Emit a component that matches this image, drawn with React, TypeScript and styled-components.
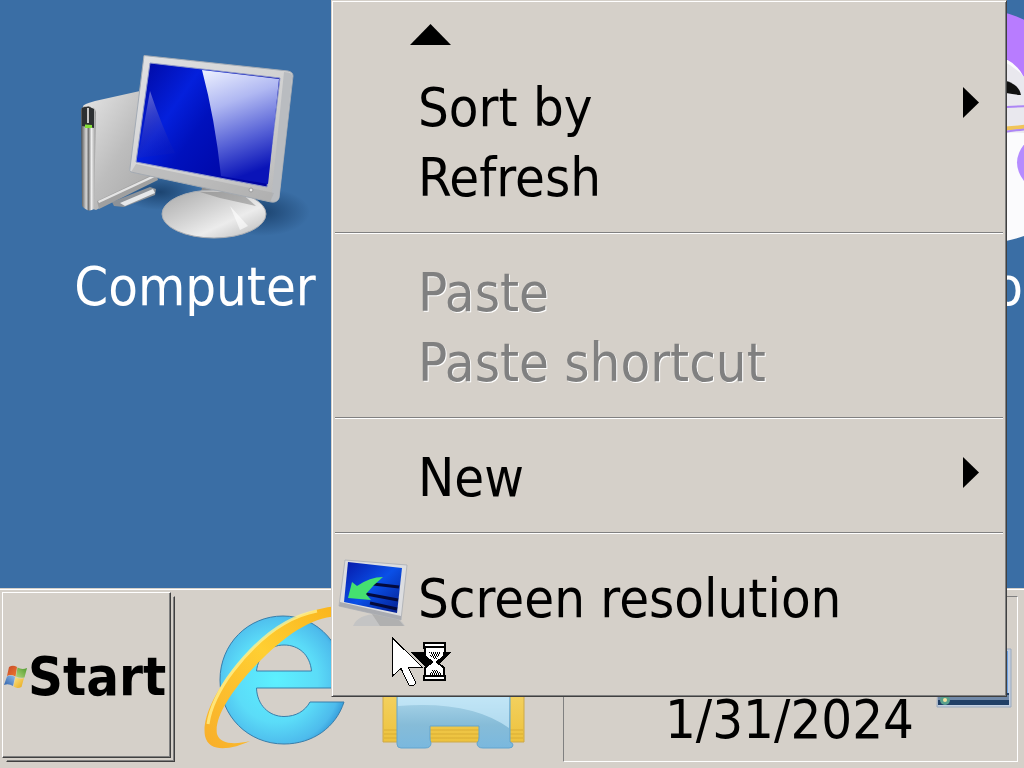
import React from "react";
import styled, { createGlobalStyle, css } from "styled-components";

const FACE = "#d5d0c9";
const SHADOW = "#808080";
const DARK = "#404040";

const GlobalStyle = createGlobalStyle`
  *, *::before, *::after { box-sizing: border-box; }
  html, body { margin: 0; padding: 0; }
  body {
    overflow: hidden;
    background: #3a6ea5;
    color: #000;
    font-family: "DejaVu Sans Condensed", "DejaVu Sans", sans-serif;
    font-size: 54px;
    line-height: 70px;
  }
  svg { display: block; flex: none; overflow: visible; }
`;

const Screen = styled.div`
  position: relative;
  display: flex;
  flex-direction: column;
  min-height: 100vh;
  overflow: hidden;
`;

const Desktop = styled.main`
  position: relative;
  flex: 1;
`;

const Shortcut = styled.a<{ $x: number; $y: number }>`
  position: absolute;
  left: ${(p) => p.$x}px;
  top: ${(p) => p.$y}px;
  display: flex;
  flex-direction: column;
  align-items: center;
  gap: 8px;
  width: 240px;
  color: #fff;
  text-decoration: none;
`;

const Taskbar = styled.footer`
  display: flex;
  align-items: stretch;
  height: 180px;
  padding: 3px 6px 6px 2px;
  background: ${FACE};
  border-top: 1px solid ${FACE};
  box-shadow: inset 0 1px 0 #fff;
`;

const StartButton = styled.button`
  position: relative;
  display: flex;
  align-items: center;
  width: 169px;
  margin: 0 4px 4px 0;
  padding: 4px 0 0 1px;
  border: 1px solid;
  border-color: #fff ${DARK} ${DARK} #fff;
  box-shadow: inset -1px -1px 0 ${SHADOW};
  background: ${FACE};
  color: #000;
  font: inherit;
  font-weight: bold;

  &::after {
    content: "";
    position: absolute;
    inset: 3px -5px -5px 3px;
    border: 1px solid;
    border-color: transparent ${DARK} ${DARK} transparent;
    box-shadow: inset -1px -1px 0 ${SHADOW};
    clip-path: polygon(100% 0, 100% 100%, 0 100%, 0 calc(100% - 2px), calc(100% - 2px) calc(100% - 2px), calc(100% - 2px) 0);
  }
`;

const QuickLaunch = styled.nav`
  display: flex;
  flex: 1;
  align-items: center;
  gap: 33px;
  padding-left: 26px;
`;

const LaunchButton = styled.button`
  padding: 0;
  border: 0;
  background: none;
`;

const Tray = styled.section`
  display: flex;
  align-items: flex-end;
  justify-content: flex-end;
  gap: 23px;
  width: 455px;
  margin-top: 4px;
  padding: 0 4px 6px;
  border: 1px solid;
  border-color: ${SHADOW} #fff #fff ${SHADOW};
`;

const ShowDesktop = styled.button`
  margin-bottom: 44px;
  padding: 0;
  border: 0;
  background: none;
`;

const Menu = styled.div`
  position: absolute;
  top: 0;
  left: 331px;
  right: 17px;
  padding: 1px;
  border: 1px solid;
  border-color: ${FACE} ${DARK} ${DARK} ${FACE};
  box-shadow: inset 1px 1px 0 #fff, inset -1px -1px 0 ${SHADOW};
  background: ${FACE};
`;

const ScrollButton = styled.button<{ $down?: boolean }>`
  display: flex;
  width: 100%;
  height: ${(p) => (p.$down ? 55 : 71)}px;
  padding: ${(p) => (p.$down ? 12 : 22)}px 0 0 77px;
  border: 0;
  background: none;
`;

const MenuItem = styled.button<{ $tall?: boolean }>`
  display: flex;
  align-items: center;
  width: 100%;
  height: ${(p) => (p.$tall ? 82 : 70)}px;
  padding: 0 26px 0 0;
  border: 0;
  background: none;
  color: #000;
  font: inherit;
  text-align: left;
  white-space: nowrap;

  ${(p) =>
    p.disabled &&
    css`
      color: ${SHADOW};
      text-shadow: 1px 1px 0 #fff;
    `}
`;

const Gutter = styled.span`
  flex: none;
  width: 85px;
  padding: 0 0 12px 5px;
`;

const ItemLabel = styled.span`
  flex: 1;
`;

const SubmenuMark = styled.span`
  padding-bottom: 11px;
`;

const Separator = styled.hr`
  height: 2px;
  margin: 19px 2px 24px;
  border: 0;
  border-top: 1px solid ${SHADOW};
  border-bottom: 1px solid #fff;
`;

const Pointer = styled.div`
  position: absolute;
  top: 637px;
  left: 392px;
  pointer-events: none;
`;

const ComputerIcon = () => (
  <svg width="240" height="196" viewBox="75 48 240 196">
    <defs>
      <linearGradient id="case" x1="0" y1="0" x2="1" y2="1">
        <stop offset="0" stopColor="#e6e6e6" />
        <stop offset=".5" stopColor="#bdbdbd" />
        <stop offset="1" stopColor="#a4a4a4" />
      </linearGradient>
      <linearGradient id="front" x1="0" y1="0" x2="1" y2="0">
        <stop offset="0" stopColor="#4c4c4c" />
        <stop offset=".35" stopColor="#d8d8d8" />
        <stop offset=".5" stopColor="#777" />
        <stop offset=".7" stopColor="#eee" />
        <stop offset="1" stopColor="#8f8f8f" />
      </linearGradient>
      <linearGradient id="bezel" x1="0" y1="0" x2="1" y2="1">
        <stop offset="0" stopColor="#e0e1e3" />
        <stop offset=".6" stopColor="#d0d0d0" />
        <stop offset="1" stopColor="#b4b4b4" />
      </linearGradient>
      <linearGradient id="panel" x1="0" y1="0" x2="1" y2=".6">
        <stop offset="0" stopColor="#00079e" />
        <stop offset=".35" stopColor="#0420dc" />
        <stop offset=".55" stopColor="#0011bd" />
        <stop offset="1" stopColor="#0004a0" />
      </linearGradient>
      <linearGradient id="glare" x1="0" y1="0" x2=".25" y2="1">
        <stop offset="0" stopColor="#eef2ff" />
        <stop offset=".35" stopColor="#b0b8f2" />
        <stop offset=".7" stopColor="#5560d6" />
        <stop offset="1" stopColor="#0a14b8" />
      </linearGradient>
      <linearGradient id="glare2" x1="0" y1="0" x2=".3" y2="1">
        <stop offset="0" stopColor="#6c74dc" />
        <stop offset="1" stopColor="#1a22b4" stopOpacity=".2" />
      </linearGradient>
      <linearGradient id="foot" x1="0" y1="0" x2="1" y2="1">
        <stop offset="0" stopColor="#a8a8a8" />
        <stop offset=".45" stopColor="#d6d6d6" />
        <stop offset=".65" stopColor="#ececec" />
        <stop offset="1" stopColor="#b5b5b5" />
      </linearGradient>
      <radialGradient id="cast">
        <stop offset="0" stopColor="#12365f" stopOpacity=".75" />
        <stop offset="1" stopColor="#12365f" stopOpacity="0" />
      </radialGradient>
    </defs>
    <ellipse cx="262" cy="212" rx="48" ry="24" fill="url(#cast)" />
    <ellipse cx="160" cy="192" rx="40" ry="18" fill="url(#cast)" />
    <path d="M112 202 150 187 156 189 155 195 124 207 114 206Z" fill="#8d9298" />
    <path d="M120 203 153 189 155 193 125 206Z" fill="#e6e8ea" />
    <path d="M83 106Q84 104 95 101L140 91 160 176 96 210 90 208Z" fill="url(#case)" />
    <path d="M97 201 156 173 158 180 99 209Z" fill="#a0a0a0" />
    <path d="M98 201 156 174 157 176 99 203Z" fill="#e4e4e4" />
    <path d="M81 110Q81 106 88 106T96 112L94 209Q88 213 82 206Z" fill="url(#front)" />
    <path d="M82 108Q88 105 94 109V128L82 126Z" fill="#2d3032" />
    <path d="M88 108V123" stroke="#c9c9c9" strokeWidth="2" />
    <path d="M85 124.500 92 125V128H85Z" fill="#86e03b" />
    <path d="M202 188H236L238 202H198Z" fill="#8c8c8c" />
    <ellipse cx="214" cy="214" rx="52" ry="24" fill="url(#foot)" stroke="#a9adb3" />
    <path d="M200 192H240L256 206 220 198Z" fill="#7d7d7d" opacity=".5" />
    <path d="M230 206 248 226 240 230Z" fill="#fff" opacity=".6" />
    <path d="M144 55.500 288 71Q293 72 293 76L279 198Q277 203 271 202L131 172Q129 171 130 168Z" fill="url(#bezel)" stroke="#a3abb5" />
    <path d="M284 72Q294 72 292 78L279 198Q277 203 271 201Z" fill="#b9bcc0" />
    <path d="M136 164 274 193 270 202 131 172Z" fill="#a8a8a8" opacity=".5" />
    <path d="M150 63 280 78 267 187 136 162Z" fill="url(#panel)" stroke="#8e97c8" />
    <path d="M202 70 279 79 268 184 221 176Q215 119 202 70Z" fill="url(#glare)" />
    <path d="M150 91Q162 127 175 153L138 158Z" fill="url(#glare2)" />
    <circle cx="251" cy="190" r="2" fill="#ececec" stroke="#999" />
  </svg>
);

const MascotIcon = () => (
  <svg width="240" height="196" viewBox="888 48 240 196">
    <path d="M985 60H1100V236H1024Q1016 239 1006 241H985Z" fill="#fbfbfd" />
    <path d="M985 9Q1012 12 1032 24L1050 80 1026 82Q1020 66 1006 59L985 56Z" fill="#b87cff" />
    <path d="M985 56Q1012 60 1028 82V134Q1015 130 985 136Z" fill="#e9e8ee" />
    <path d="M985 79Q1018 78 1021 95Q1012 95 985 88Z" fill="#111" />
    <path d="M985 108 1030 106" stroke="#ad86f5" strokeWidth="2" />
    <path d="M985 129Q1010 129 1030 126" stroke="#f0c45a" strokeWidth="4" fill="none" />
    <path d="M985 136Q1012 130 1030 129" stroke="#ad86f5" strokeWidth="2" fill="none" />
    <path d="M1030 138Q1004 162 1030 188Z" fill="#b58cff" />
  </svg>
);

const FlagIcon = () => (
  <svg width="24" height="24" viewBox="0 0 24 24">
    <defs>
      <linearGradient id="flagRed" x1="0" y1="0" x2="1" y2="1">
        <stop offset="0" stopColor="#c4492a" />
        <stop offset="1" stopColor="#f0782c" />
      </linearGradient>
      <linearGradient id="flagGreen" x1="0" y1="1" x2="1" y2="0">
        <stop offset="0" stopColor="#b4d67a" />
        <stop offset="1" stopColor="#4c9a2c" />
      </linearGradient>
      <linearGradient id="flagBlue" x1="0" y1="1" x2="1" y2="0">
        <stop offset="0" stopColor="#2d5fa8" />
        <stop offset="1" stopColor="#8fbcec" />
      </linearGradient>
      <linearGradient id="flagYellow" x1="0" y1="0" x2="1" y2="1">
        <stop offset="0" stopColor="#fbe48a" />
        <stop offset="1" stopColor="#e8a818" />
      </linearGradient>
    </defs>
    <path d="M5 2Q9-.500 13 2L11.500 11.500Q7 9 3 11Z" fill="url(#flagRed)" />
    <path d="M13.500 2.500Q18 5 23 3L20.500 12.500Q16 13.500 12 11.500Z" fill="url(#flagGreen)" />
    <path d="M3 11.500Q7 9.500 11 12L9 21Q4.500 18 0 20Z" fill="url(#flagBlue)" />
    <path d="M11.500 12Q16 14.500 20 13L17.500 22Q13 24 9.500 21.500Z" fill="url(#flagYellow)" />
  </svg>
);

const BrowserIcon = () => (
  <svg width="146" height="146" viewBox="202 604 146 146">
    <defs>
      <radialGradient id="globe" cx=".45" cy=".5" r=".6">
        <stop offset="0" stopColor="#5cf0ff" />
        <stop offset=".55" stopColor="#5bdcf8" />
        <stop offset=".85" stopColor="#4dbbec" />
        <stop offset="1" stopColor="#2b8fd2" />
      </radialGradient>
      <linearGradient id="orbit" x1="1" y1="0" x2="0" y2="1">
        <stop offset="0" stopColor="#f9b21c" />
        <stop offset=".45" stopColor="#ffcf32" />
        <stop offset="1" stopColor="#f8ae2a" />
      </linearGradient>
    </defs>
    <path
      d="M284 616C319 616 347 645 346 688H257.500C258 705 270 716.500 285 716.500C297 716.500 306 711 311 702H345C337 727 314 744 285 744C249 744 221 716 221 680C221 644 249 616 284 616ZM257.500 671H312.500C311 655 300 645 285 645C270 645 259 656 257.500 671Z"
      fill="url(#globe)"
      fillRule="evenodd"
      stroke="#397eaa"
    />
    <path
      d="M345 606C312 606 278 622 242 660C214 692 203 720 206 736C210 754 234 749 251 741C235 745 221 744 218 734C215 718 232 690 262 660C292 630 318 615 345 616Z"
      fill="url(#orbit)"
    />
    <path d="M318 611C286 617 258 640 234 671C220 689 211 709 209 724" fill="none" stroke="#fff08c" strokeWidth="3" opacity=".8" />
  </svg>
);

const FolderIcon = () => (
  <svg width="146" height="146" viewBox="380 604 146 146">
    <defs>
      <linearGradient id="manila" x1="0" y1="0" x2="0" y2="1">
        <stop offset="0" stopColor="#fbe58e" />
        <stop offset="1" stopColor="#edc23d" />
      </linearGradient>
      <linearGradient id="stand" x1="0" y1="0" x2="0" y2="1">
        <stop offset="0" stopColor="#b4dcee" />
        <stop offset=".6" stopColor="#86bcd8" />
        <stop offset="1" stopColor="#7ab8de" />
      </linearGradient>
    </defs>
    <path d="M383 630H524V742H383Z" fill="url(#manila)" stroke="#cda94a" />
    <path d="M384 730H523M384 734H523M384 738H523" stroke="#d9ad35" />
    <path d="M397 690H510V742Q513 743 513 745Q513 748 509 748H483Q477 748 477 743Q479 741 479 738V726H430V738Q430 741 431 743Q431 748 425 748H401Q397 748 397 744Z" fill="url(#stand)" stroke="#62a5cf" />
    <path d="M398 706Q470 700 509 728V696H398Z" fill="#d0f0ff" opacity=".6" />
  </svg>
);

const ShowDesktopIcon = () => (
  <svg width="76" height="64" viewBox="938 648 76 64">
    <path d="M940 650H1012V708H938Z" fill="#c3cfe0" stroke="#9aa9be" />
    <path d="M941 652H1009V697H941Z" fill="#6ba0e4" />
    <path d="M939 694H1010V706H939Z" fill="#203f66" />
    <path d="M939 696H1010V701H939Z" fill="#7189a8" />
    <circle cx="946" cy="701" r="5" fill="#58a08d" />
    <circle cx="946" cy="701" r="2" fill="#f2e2a0" />
  </svg>
);

const ResolutionIcon = () => (
  <svg width="70" height="68" viewBox="338 559 70 68">
    <defs>
      <linearGradient id="mini" x1="0" y1="0" x2="1" y2="1">
        <stop offset="0" stopColor="#0618a8" />
        <stop offset=".5" stopColor="#0a50e8" />
        <stop offset="1" stopColor="#051c8a" />
      </linearGradient>
    </defs>
    <path d="M353 626Q358 614 378 614T405 626Z" fill="#c4c4c4" />
    <path d="M372 614H394L404 626H380Z" fill="#9b9b9b" opacity=".5" />
    <path d="M345 560 407 565 401 620 339 606Z" fill="#dcdde0" stroke="#b4b6ba" />
    <path d="M340 602 401 616V620L339 606Z" fill="#a9abb0" />
    <path d="M348 562 402 568 397 613 344 602Z" fill="url(#mini)" />
    <path d="M373 584 399 587M366 594 398 600M370 603 397 609" stroke="#040a3c" strokeWidth="3" />
    <path d="M383 577Q374 584 366 594L371 600 348 598 352 582 357 586Q370 577 383 577Z" fill="#45e070" />
  </svg>
);

const BusyPointer = () => (
  <svg width="60" height="50" viewBox="392 637 60 50" shapeRendering="crispEdges">
    <path d="M410 652H451L431 672Z" fill="#000" />
    <path d="M392.500 638V676L401 668.500 409 685H414L416 683 408 667H422Z" fill="#fff" stroke="#000" />
    <path d="M424 643H445V648L444 656 437 662 444 668V676H445V680H424V676H425V668L432 662 425 656V648H424Z" fill="#fff" stroke="#000" strokeWidth="2" />
    <path d="M423 643H446M424 647H445M424 676H445M423 680H446" stroke="#000" strokeWidth="2" />
    <path d="M429 652.500H441M432 654.500H440M431 656.500H438M434 658.500H437M432 670.500H438M431 672.500H440M430 674.500H441M431 653.500H441M430 655.500H439M433 657.500H437M433 671.500H439M430 673.500H441" stroke="#000" strokeDasharray="1 1" />
  </svg>
);

const Triangle = ({ dir }: { dir: "up" | "right" }) =>
  dir === "up" ? (
    <svg width="41" height="21" viewBox="0 0 41 21">
      <path d="M20.500 0 41 21H0Z" />
    </svg>
  ) : (
    <svg width="16" height="31" viewBox="0 0 16 31">
      <path d="M0 0 16 15.500 0 31Z" />
    </svg>
  );

type Entry = { label: string; submenu?: boolean; disabled?: boolean; icon?: React.ReactNode };

const groups: Entry[][] = [
  [{ label: "Sort by", submenu: true }, { label: "Refresh" }],
  [
    { label: "Paste", disabled: true },
    { label: "Paste shortcut", disabled: true },
  ],
  [{ label: "New", submenu: true }],
  [{ label: "Screen resolution", icon: <ResolutionIcon /> }],
];

export default function App() {
  return (
    <Screen>
      <GlobalStyle />
      <Desktop>
        <Shortcut href="#computer" $x={75} $y={48}>
          <ComputerIcon />
          Computer
        </Shortcut>
        <Shortcut href="#app" $x={888} $y={48}>
          <MascotIcon />
          o
        </Shortcut>
      </Desktop>
      <Taskbar>
        <StartButton>
          <FlagIcon />
          Start
        </StartButton>
        <QuickLaunch aria-label="Quick launch">
          <LaunchButton aria-label="Browser">
            <BrowserIcon />
          </LaunchButton>
          <LaunchButton aria-label="Files">
            <FolderIcon />
          </LaunchButton>
        </QuickLaunch>
        <Tray>
          <time dateTime="2024-01-31">1/31/2024</time>
          <ShowDesktop aria-label="Show desktop">
            <ShowDesktopIcon />
          </ShowDesktop>
        </Tray>
      </Taskbar>
      <Menu role="menu">
        <ScrollButton aria-label="Scroll up">
          <Triangle dir="up" />
        </ScrollButton>
        {groups.map((group, i) => (
          <React.Fragment key={group[0].label}>
            {i > 0 && <Separator />}
            {group.map((item) => (
              <MenuItem key={item.label} role="menuitem" disabled={item.disabled} $tall={!!item.icon}>
                <Gutter>{item.icon}</Gutter>
                <ItemLabel>{item.label}</ItemLabel>
                {item.submenu && (
                  <SubmenuMark>
                    <Triangle dir="right" />
                  </SubmenuMark>
                )}
              </MenuItem>
            ))}
          </React.Fragment>
        ))}
        <ScrollButton $down aria-label="Scroll down" />
      </Menu>
      <Pointer>
        <BusyPointer />
      </Pointer>
    </Screen>
  );
}
